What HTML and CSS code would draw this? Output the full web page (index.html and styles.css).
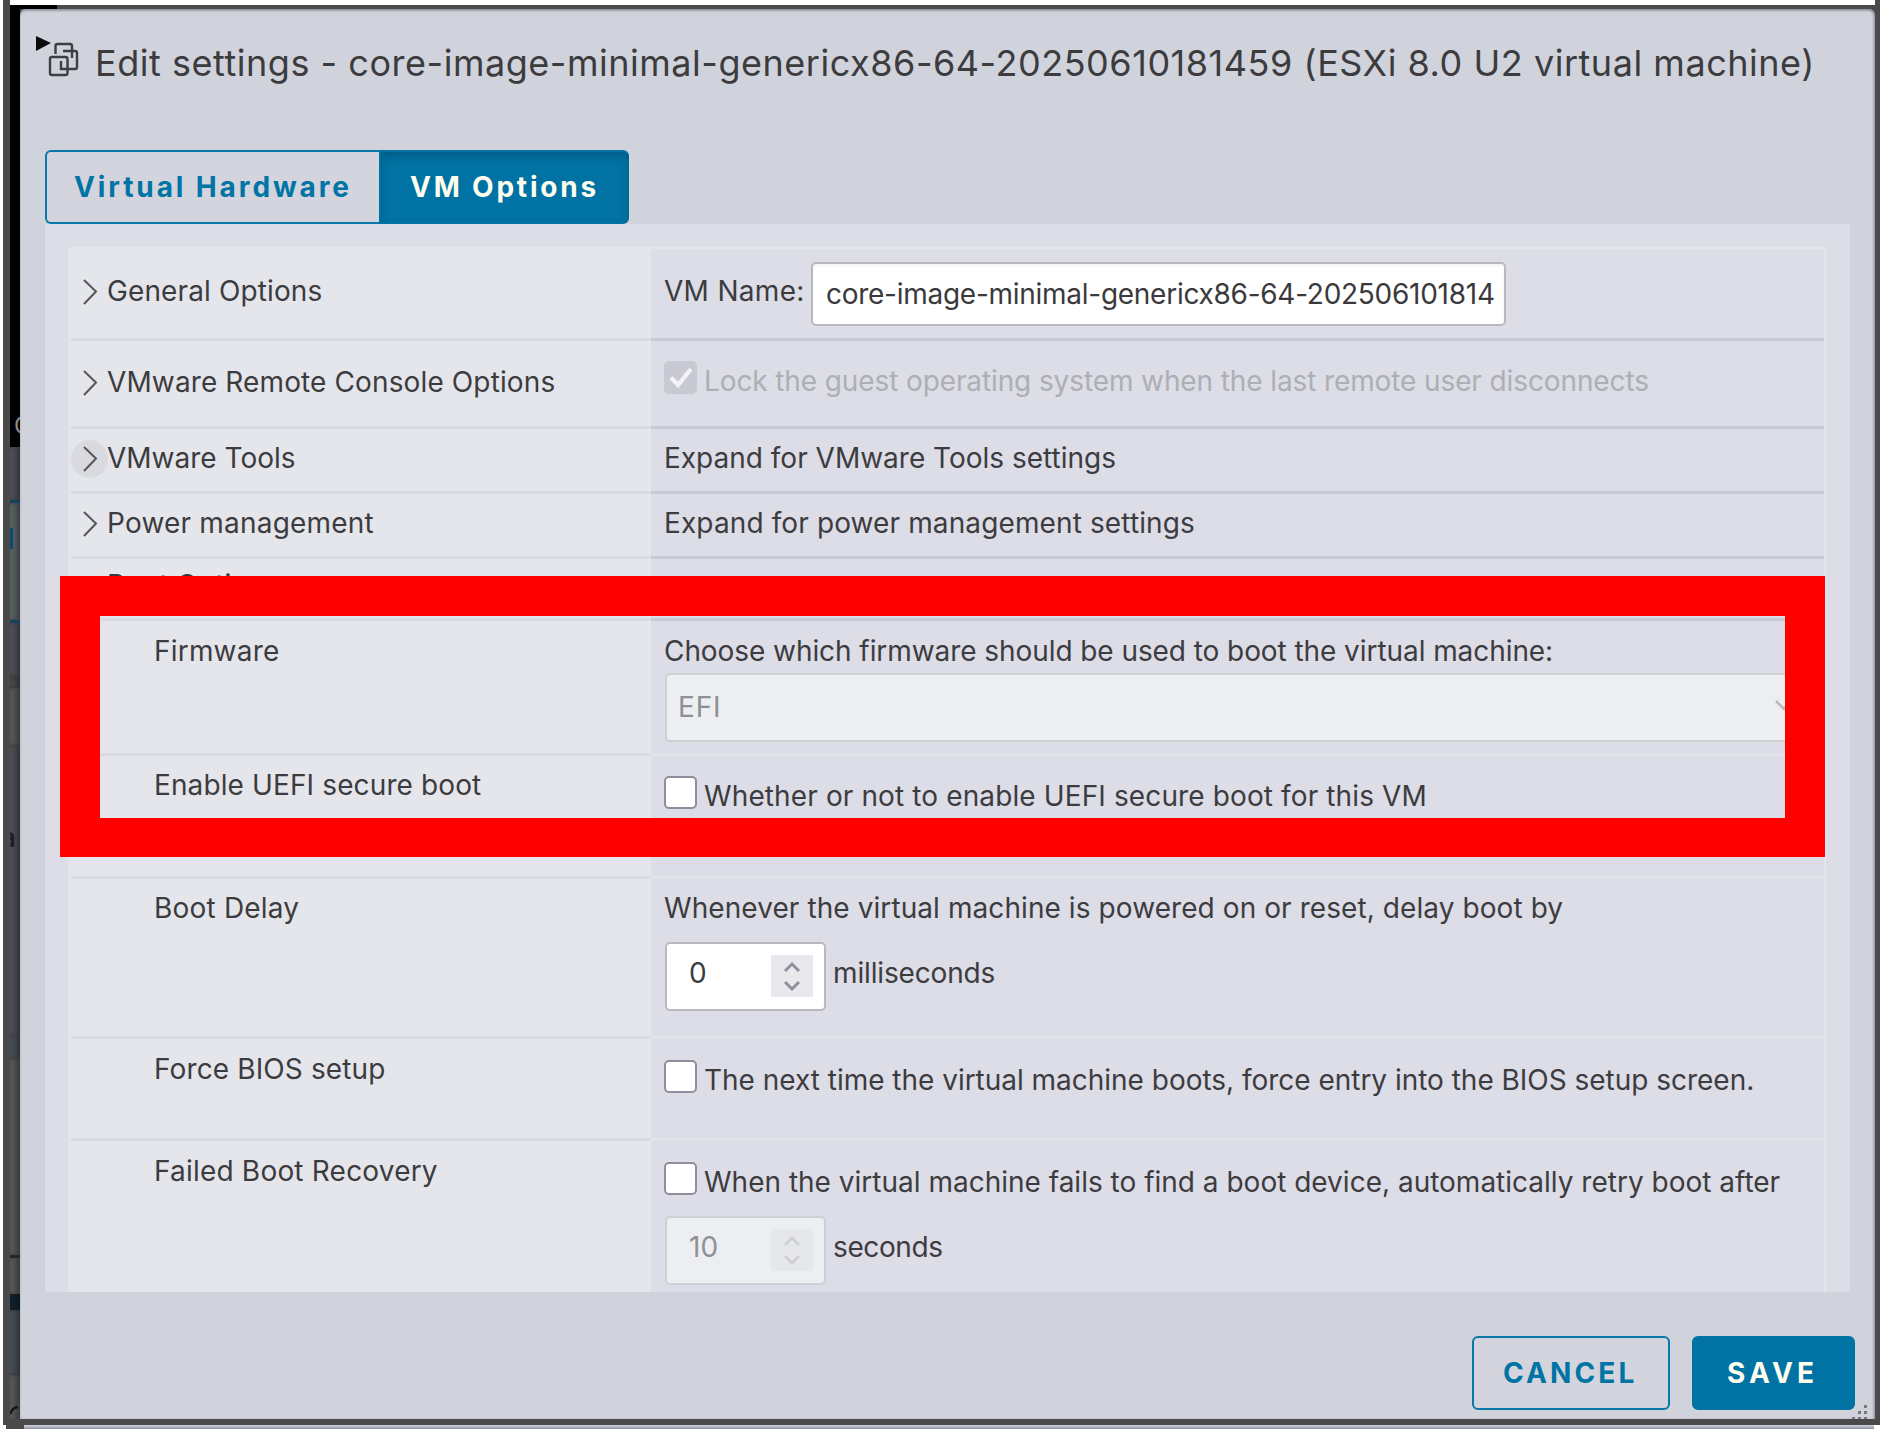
FILE: index.html
```html
<!DOCTYPE html>
<html lang="en">
<head>
<meta charset="utf-8">
<title>Edit settings</title>
<link rel="stylesheet" href="styles.css">
</head>
<body>
<div class="window">
  <div class="backdrop">
    <div class="bg console"><span class="console-text">C</span></div>
    <div class="bg bg-bar"></div>
    <div class="bg bg-info"><i class="info-mark"></i></div>
    <div class="bg bg-bar"></div>
    <div class="bg bg-head"></div>
    <div class="bg bg-row"></div>
    <div class="bg bg-text"><span>a</span></div>
    <div class="bg bg-slate"></div>
    <div class="bg bg-flat"></div>
    <div class="bg bg-edge"></div>
    <div class="bg bg-navy"></div>
    <div class="bg bg-teal"></div>
    <div class="bg bg-last"><svg width="10" height="14" viewBox="0 0 10 14"><path d="M0 8 Q3 1 8 1" fill="none" stroke="#161616" stroke-width="2.5"/></svg></div>
  </div>

  <div class="dialog">
    <header class="title-bar">
      <svg class="vm-icon" width="46" height="46" viewBox="0 0 46 46">
        <path d="M0 -1 L15 6 L0 14 Z" fill="#0a0a0a"/>
        <g fill="none" stroke="#3d3d42" stroke-width="2.4">
          <path d="M19.5 17 V9 Q19.5 7 21.5 7 H34 Q36 7 36 9 V21"/>
          <path d="M27 14 H39 Q41 14 41 16 V30 Q41 32 39 32 H25 V24"/>
          <rect x="14" y="20" width="17.5" height="18" rx="2"/>
        </g>
      </svg>
      <h1 class="title">Edit settings - core-image-minimal-genericx86-64-20250610181459 (ESXi 8.0 U2 virtual machine)</h1>
    </header>

    <nav class="tabs">
      <button class="tab">Virtual Hardware</button>
      <button class="tab active">VM Options</button>
    </nav>

    <main class="panel">
      <div class="table">
        <div class="row r-general">
          <div class="label"><svg class="caret" viewBox="0 0 18 28"><path d="M3 2 L15 13.5 L3 26"/></svg>General Options</div>
          <div class="cell inline"><span class="n3">VM Name:</span><div class="input name"><span>core-image-minimal-genericx86-64-202506101814</span></div></div>
        </div>
        <div class="row r-console">
          <div class="label"><svg class="caret" viewBox="0 0 18 28"><path d="M3 2 L15 13.5 L3 26"/></svg>VMware Remote Console Options</div>
          <div class="cell check"><span class="box checked"><svg viewBox="0 0 33 33"><path d="M7 16.5 L14 24 L27 8"/></svg></span><span class="muted">Lock the guest operating system when the last remote user disconnects</span></div>
        </div>
        <div class="row r-tools">
          <div class="label n0"><svg class="caret hover" viewBox="0 0 18 28"><path d="M3 2 L15 13.5 L3 26"/></svg>VMware Tools</div>
          <div class="cell n0">Expand for VMware Tools settings</div>
        </div>
        <div class="row r-power">
          <div class="label n2"><svg class="caret" viewBox="0 0 18 28"><path d="M3 2 L15 13.5 L3 26"/></svg>Power management</div>
          <div class="cell">Expand for power management settings</div>
        </div>
        <div class="row r-boot">
          <div class="label"><svg class="caret" viewBox="0 0 18 28"><path d="M1 9 L9 19 L17 9"/></svg>Boot Options</div>
          <div class="cell"></div>
        </div>
        <div class="row sub r-firmware">
          <div class="label n2">Firmware</div>
          <div class="cell stack"><span class="m1">Choose which firmware should be used to boot the virtual machine:</span>
            <div class="input select disabled"><span>EFI</span><svg width="18" height="12" viewBox="0 0 18 12"><path d="M1 1 L9 9 L17 1"/></svg></div>
          </div>
        </div>
        <div class="row sub r-secure">
          <div class="label">Enable UEFI secure boot</div>
          <div class="cell check"><span class="box"></span><span>Whether or not to enable UEFI secure boot for this VM</span></div>
        </div>
        <div class="row sub r-delay">
          <div class="label n2">Boot Delay</div>
          <div class="cell stack"><span class="n1">Whenever the virtual machine is powered on or reset, delay boot by</span>
            <div class="unit"><div class="input spinner"><span>0</span><svg class="steps" viewBox="0 0 42 42"><path d="M14 16 L21 9 L28 16 M14 27 L21 34 L28 27"/></svg></div><span class="m2">milliseconds</span></div>
          </div>
        </div>
        <div class="row sub r-bios">
          <div class="label">Force BIOS setup</div>
          <div class="cell check m0"><span class="box"></span><span>The next time the virtual machine boots, force entry into the BIOS setup screen.</span></div>
        </div>
        <div class="row sub r-recovery">
          <div class="label n2">Failed Boot Recovery</div>
          <div class="cell stack"><div class="check n0"><span class="box"></span><span>When the virtual machine fails to find a boot device, automatically retry boot after</span></div>
            <div class="unit"><div class="input spinner disabled"><span>10</span><svg class="steps" viewBox="0 0 42 42"><path d="M14 16 L21 9 L28 16 M14 27 L21 34 L28 27"/></svg></div><span class="m4">seconds</span></div>
          </div>
        </div>
      </div>
    </main>

    <footer class="actions">
      <button class="btn cancel">CANCEL</button>
      <button class="btn save">SAVE</button>
    </footer>
    <svg class="grip" width="16" height="14" viewBox="0 0 16 14" fill="#77787f"><path d="M12 0h3v3h-3zM6 6h3v3h-3zM12 6h3v3h-3zM0 12h3v3h-3zM6 12h3v3h-3zM12 12h3v3h-3z"/></svg>
  </div>
</div>
<div class="under"></div>
<div class="highlight"></div>
</body>
</html>
```
FILE: styles.css
```css
* { box-sizing: border-box; }

body {
  margin: 0;
  width: 1880px;
  height: 1430px;
  overflow: hidden;
  background: #fff;
  font: 400 28px/34px Inter, "Liberation Sans", sans-serif;
  letter-spacing: 0.12px;
  color: #3c3c3f;
}

/* Letter spacing steps */
.m0 { letter-spacing: -0.02px; }
.n0 { letter-spacing: 0; }
.n1 { letter-spacing: 0.08px; }
.n2 { letter-spacing: 0.2px; }
.n3 { letter-spacing: 0.3px; }
.m1 { letter-spacing: -0.07px; }
.m2 { letter-spacing: -0.15px; }
.m4 { letter-spacing: -0.39px; }

/* Window frame and the dimmed page behind the dialog */
.window {
  display: flex;
  height: 1425px;
  margin-left: 3px;
  border: solid #4a4a4a;
  border-width: 0 5px 6px 7px;
  background: linear-gradient(#fff 5px, #4a4b4e 5px);
}

.backdrop {
  display: flex;
  flex-direction: column;
  width: 10px;
  padding-top: 5px;
  overflow: hidden;
  flex: none;
}

.bg { width: 10px; flex: none; overflow: hidden; box-shadow: inset -4px 0 4px rgba(0, 0, 0, 0.3); }
.console { height: 442px; background: #000; padding-top: 404px; }
.console-text { display: block; margin-left: 4px; font-size: 24px; color: #8a8a8a; }
.bg-bar { height: 53px; background: #4d4e54; }
.bg-info { height: 123px; background: #575f60; border: solid #12445f; border-width: 3px 0; padding-top: 25px; }
.info-mark { display: block; width: 3px; height: 21px; background: #0c4a70; }
.bg-head { height: 12px; background: #45474b; }
.bg-row { height: 57px; background: #565656; }
.bg-text { height: 291px; background: #4d4c52; padding-top: 76px; font-size: 26px; font-weight: 600; color: #1f1f22; }
.bg-text span { margin-left: -9px; }
.bg-slate { height: 23px; background: #474c52; }
.bg-flat { height: 196px; background: #565656; }
.bg-edge { height: 39px; background: #565656; border-top: 3px solid #262628; }
.bg-navy { height: 16px; background: #10212c; }
.bg-teal { height: 65px; background: #454b51; }
.bg-last { height: 46px; background: #565656; padding-top: 31px; }
.bg-last svg { display: block; }

.dialog {
  position: relative;
  display: flex;
  flex-direction: column;
  width: 1855px;
  margin-top: 9px;
  padding-left: 25px;
  border-radius: 6px 6px 0 0;
  background: #d1d3dc;
  box-shadow: inset 0 2px 2px rgba(110, 112, 125, 0.55), inset -2px 0 2px rgba(130, 132, 145, 0.5);
}

.dialog::before {
  content: "";
  position: absolute;
  left: -10px;
  top: -4px;
  width: 47px;
  height: 4px;
  background: #000;
}

/* Header */
.title-bar { display: flex; height: 141px; padding-top: 28px; margin-left: -9px; }
.vm-icon { flex: none; width: 46px; overflow: visible; }
.title {
  margin: 4px 0 0 13px;
  font-size: 36px;
  line-height: 44px;
  font-weight: 400;
  letter-spacing: 0.53px;
  white-space: nowrap;
}

/* Tabs */
.tabs { display: flex; height: 74px; width: 584px; flex: none; }
.tab, .btn {
  font: 700 28px/34px Inter, "Liberation Sans", sans-serif;
  padding: 0;
  color: #0075a5;
  border: 2.5px solid #0878a8;
  background: #d3d4dd;
  text-align: left;
  white-space: nowrap;
}
.tab { width: 334px; padding-left: 27px; border-right: 0; border-radius: 6px 0 0 6px; letter-spacing: 2.9px; }
.tab.active {
  width: 250px;
  padding-left: 29px;
  border-radius: 0 6px 6px 0;
  border-color: #0072a3;
  background: #0072a3;
  color: #fefdee;
  letter-spacing: 2.8px;
  box-shadow: inset 0 5px 8px rgba(0, 50, 80, 0.3);
}

/* Options panel */
.panel { width: 1805px; height: 1068px; flex: none; padding: 23px 24px 0 23px; background: #dcdde6; }
.table { height: 1045px; border: solid #e4e5ea; border-width: 2px 2px 0 3px; overflow: hidden; }
.row { display: grid; grid-template-columns: 580px 1fr; white-space: nowrap; }
.row > * { border-bottom: 3px solid #c8cad4; }
.row > .label { background: #e5e6eb; border-bottom-color: #dadbe0; padding-left: 36px; }
.sub > .cell { border-bottom-color: #e3e4ea; }
.sub > .label { padding-left: 83px; }
.cell { padding-left: 13px; }
.label { position: relative; }

.r-general { height: 92px; } .r-general > .label { padding-top: 25px; }
.r-console { height: 88px; } .r-console > .label { padding-top: 24px; }
.r-tools { height: 65px; } .r-tools > * { padding-top: 12px; }
.r-power { height: 65px; } .r-power > * { padding-top: 12px; }
.r-boot { height: 62px; } .r-boot > * { padding-top: 9px; }
.r-firmware { height: 135px; } .r-firmware > * { padding-top: 13px; }
.r-secure { height: 123px; } .r-secure > .label { padding-top: 12px; }
.r-delay { height: 160px; } .r-delay > * { padding-top: 12px; }
.r-bios { height: 102px; } .r-bios > .label { padding-top: 13px; }
.r-recovery { height: 155px; } .r-recovery > .label { padding-top: 13px; }

.caret { position: absolute; left: 10px; margin-top: 4px; width: 18px; height: 28px; fill: none; stroke: #55565b; stroke-width: 2; overflow: visible; }
.caret.hover { left: 0; margin-top: -1px; width: 37px; height: 38px; padding: 5px 9px 5px 10px; border-radius: 50%; background: #d9dadf; }

.inline { display: flex; padding-top: 13px; }
.inline > span { width: 147px; padding-top: 12px; }

.input { border: 2px solid #b9b9bd; border-radius: 5px; background: #fff; display: flex; }
.name { width: 695px; height: 64px; padding: 13px 10px 0 13px; color: #3a3a3d; letter-spacing: -0.27px; box-shadow: inset 0 3px 3px rgba(0, 0, 0, 0.04); }
.input.disabled { background: #eceef2; border-color: #cfd0d4; color: #8f9095; }

.check { display: flex; }
.row > .check { padding-top: 20px; }
.check > span:last-child { margin: 3px 0 0 7px; }
.muted { color: #adafb5; letter-spacing: -0.11px; }
.r-bios > .check { padding-top: 21px; }
.box { width: 33px; height: 33px; flex: none; border: 2px solid #8e8e9d; border-radius: 5px; background: #fff; }
.box.checked { border: 0; background: #c8c9d2; }
.box svg { display: block; fill: none; stroke: #f3f4f7; stroke-width: 4.2; }

.stack { display: flex; flex-direction: column; align-items: flex-start; }
.select { width: 1140px; height: 69px; margin-top: 5px; margin-left: 1px; padding: 15px 10px 0 11px; justify-content: space-between; letter-spacing: 0.8px; }
.select svg { margin-top: 10px; fill: none; stroke: #b9babf; stroke-width: 2.5; }

.unit { display: flex; margin-left: 1px; }
.spinner { width: 161px; height: 69px; padding: 12px 11px 0 22px; justify-content: space-between; margin-right: 7px; }
.unit > span { padding-top: 14px; }
.steps { width: 42px; height: 42px; margin-top: -1px; background: #e8e8ed; fill: none; stroke: #8f8f9e; stroke-width: 3; }
.disabled .steps { background: #e6e7eb; stroke: #cfd0d5; }
.r-delay .unit { margin-top: 17px; }
.r-recovery > .stack { padding-top: 21px; }
.r-recovery .unit { margin-top: 17px; }

/* Footer buttons */
.actions { display: flex; justify-content: flex-end; gap: 22px; padding: 44px 20px 0 0; }
.btn { height: 74px; border-radius: 6px; }
.cancel { width: 198px; padding-left: 29px; letter-spacing: 3.1px; }
.save { width: 163px; padding-left: 33px; background: #0072a3; color: #fefdee; border-color: #0072a3; letter-spacing: 4.2px; }

.grip { position: absolute; right: 7px; bottom: 0; }

.under {
  height: 4px;
  margin: 0 6px 0 6px;
  background: linear-gradient(90deg, #4a4a4c 18px, transparent 18px), linear-gradient(#c8cad6 1px, #9a9ca8 3px);
}

/* Callout frame over the firmware rows */
.highlight {
  position: absolute;
  left: 60px;
  top: 576px;
  width: 1765px;
  height: 281px;
  border: solid #f00;
  border-width: 40px;
  border-bottom-width: 39px;
}
```
